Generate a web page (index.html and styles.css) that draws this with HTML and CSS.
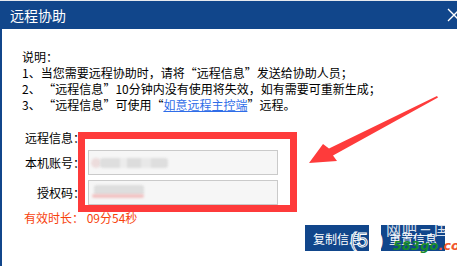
FILE: index.html
```html
<!DOCTYPE html>
<html lang="zh-CN">
<head>
<meta charset="utf-8">
<title>远程协助</title>
<link rel="stylesheet" href="styles.css">
</head>
<body>
<div class="window">
  <div class="titlebar">
    <span class="title">远程协助</span>
    <svg class="close" width="14" height="14" viewBox="0 0 14 14"><path d="M1 1 L13 13 M13 1 L1 13" stroke="#fff" stroke-width="1.3" fill="none"/></svg>
  </div>
  <div class="content">
    <div class="notes">
      <p>说明：</p>
      <p>1、当您需要远程协助时，请将<span class="lq">“</span>远程信息<span class="rq">”</span>发送给协助人员；</p>
      <p>2、 <span class="lq">“</span>远程信息<span class="rq">”</span>10分钟内没有使用将失效，如有需要可重新生成；</p>
      <p>3、 <span class="lq">“</span>远程信息<span class="rq">”</span>可使用<span class="lq">“</span><a class="link" href="#">如意远程主控端</a><span class="rq">”</span>远程。</p>
    </div>
    <div class="form">
      <div class="row"><span class="label">远程信息：</span></div>
      <div class="row field"><span class="label">本机账号：</span><div class="input"><div class="blur b1a"></div><div class="blur b1b"></div></div></div>
      <div class="row field second"><span class="label">授权码：</span><div class="input"><div class="blur b2a"></div><div class="blur b2b"></div></div></div>
    </div>
    <div class="timer">有效时长： 09分54秒</div>
    <div class="buttons">
      <button class="btn">复制信息</button>
      <button class="btn">重置信息</button>
    </div>
  </div>
  <div class="annot-box"></div>
  <svg class="arrow" width="457" height="266" viewBox="0 0 457 266">
    <polygon points="309,163 323,144 329,148.5 437,96 438,97.5 333,155.5 337,161" fill="#fe3b3b"/>
  </svg>
  <div class="watermark">
    <span class="wm-paren">(5</span>
    <span class="wm-paren2">)</span>
    <span class="wm-cn">网吧三国</span>
    <span class="wm-url"><span class="wm-g">583go</span><span class="wm-o">.com</span></span>
  </div>
</div>
</body>
</html>
```

FILE: styles.css
```css
* { box-sizing: border-box; }
html, body {
  margin: 0;
  padding: 0;
  background: #fff;
}
body {
  width: 457px;
  height: 266px;
  overflow: hidden;
  font-family: "Noto Sans CJK SC", "Liberation Sans", sans-serif;
  font-size: 12px;
  color: #000;
}
.window {
  position: relative;
  width: 457px;
  height: 266px;
  overflow: hidden;
  border-top: 1px solid #e6e9ee;
  background: #fff;
}
.titlebar {
  height: 28px;
  background: #11468b;
  display: flex;
  align-items: center;
  padding-left: 10px;
}
.title {
  color: #fff;
  font-size: 14px;
  line-height: 16px;
}
.close {
  margin-left: auto;
  margin-right: -4px;
  margin-top: 0;
}
.content {
  border-left: 2px solid #11468b;
  height: 237px;
  padding-left: 20px;
  padding-top: 20px;
}
.notes p {
  margin: 0;
  line-height: 16px;
  white-space: nowrap;
}
.lq, .rq {
  display: inline-block;
  width: 12px;
}
.lq { text-align: right; }
.rq { text-align: left; }
.link {
  color: #2f6de8;
  text-decoration: underline;
}
.form {
  margin-top: 17px;
  margin-left: 2px;
}
.row {
  display: flex;
  align-items: center;
  line-height: 16px;
}
.row.field {
  margin-top: 4px;
}
.row.second {
  margin-top: 5px;
}
.label {
  width: 61px;
  text-align: right;
  white-space: nowrap;
}
.input {
  position: relative;
  margin-left: 3px;
  width: 190px;
  height: 25px;
  border: 1px solid #cacaca;
  background: #f6f6f6;
  overflow: hidden;
}
.blur {
  position: absolute;
  filter: blur(1.2px);
  border-radius: 3px;
}
.b1a {
  left: 2px;
  top: 7px;
  width: 10px;
  height: 10px;
  background: #ecdcdc;
  border-radius: 5px;
}
.b1b {
  left: 11px;
  top: 7px;
  width: 68px;
  height: 10px;
  background: linear-gradient(90deg, #dedede 0 30%, #ececec 30% 40%, #dcdcdc 40% 60%, #e8e8e8 60% 75%, #dedede 75% 100%);
}
.b2a {
  left: 5px;
  top: 4px;
  width: 50px;
  height: 10px;
  background: #dedede;
}
.b2b {
  left: 3px;
  top: 13px;
  width: 52px;
  height: 4px;
  background: #f2c4c4;
}
.timer {
  margin-top: 6px;
  margin-left: 2px;
  line-height: 14px;
  color: #f7420c;
  white-space: pre;
}
.buttons {
  display: flex;
  justify-content: flex-end;
  gap: 12px;
  padding-right: 12px;
}
.btn {
  width: 64px;
  height: 26px;
  border: 0;
  padding: 0;
  background: #11468b;
  color: #fff;
  font-family: "Noto Sans CJK SC", "Liberation Sans", sans-serif;
  font-size: 12px;
}
.annot-box {
  position: absolute;
  left: 78px;
  top: 131px;
  width: 219px;
  height: 80px;
  border: 7px solid #fe3b3b;
}
.arrow {
  position: absolute;
  left: 0;
  top: -1px;
}
.watermark {
  position: absolute;
  left: 0;
  top: 0;
  width: 457px;
  height: 266px;
  pointer-events: none;
}
.wm-paren {
  position: absolute;
  left: 350px;
  top: 228px;
  font-size: 20px;
  line-height: 22px;
  color: #11468b;
  -webkit-text-stroke: 1px #fff;
  font-family: "Liberation Sans", sans-serif;
}
.wm-paren2 {
  position: absolute;
  left: 377px;
  top: 228px;
  font-size: 20px;
  line-height: 22px;
  color: #fff;
  font-family: "Liberation Sans", sans-serif;
}
.wm-cn {
  position: absolute;
  left: 386px;
  top: 219px;
  font-size: 15px;
  line-height: 17px;
  color: rgba(255,255,255,0.85);
  letter-spacing: 1px;
}
.wm-url {
  position: absolute;
  left: 393px;
  top: 237px;
  font-family: "DejaVu Sans", sans-serif;
  font-size: 13px;
  line-height: 15px;
  font-weight: bold;
  font-style: italic;
}
.wm-g { color: #178a2c; }
.wm-o { color: #f0572e; }
```
